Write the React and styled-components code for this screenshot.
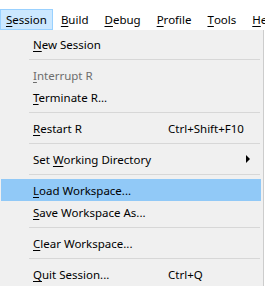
import React from 'react'
import styled, { createGlobalStyle } from 'styled-components'

const Global = createGlobalStyle`
    html, body {
        margin: 0;
        padding: 0;
        background: #ffffff;
    }
    body {
        font-family: "Noto Sans", "Open Sans", sans-serif;
        font-size: 11.5px;
        color: #000;
    }
`

const Window = styled.div`
    width: 265px;
    height: 286px;
    overflow: hidden;
    background: #ffffff;
`

const MenuBar = styled.div`
    display: flex;
    padding-top: 9px;
    height: 21px;
    white-space: nowrap;
    overflow: hidden;
`

const BarItem = styled.div`
    display: flex;
    align-items: center;
    flex-shrink: 0;
    height: 19px;
    padding: 0 ${p => p.$pad || 7}px;
    border: 1px solid ${p => (p.$open ? '#99d1ff' : 'transparent')};
    background: ${p => (p.$open ? '#cce8ff' : 'transparent')};
`

const Key = styled.span`
    text-decoration: underline;
    text-underline-offset: 2px;
    text-decoration-thickness: 1px;
`

const Menu = styled.div`
    width: 264px;
    height: 256px;
    box-sizing: border-box;
    background: #f0f0f0;
    border-right: 1px solid #cccccc;
    padding: 3px 2px 0 1px;
`

const Row = styled.div`
    display: grid;
    grid-template-columns: 135px 1fr 15px;
    align-items: center;
    height: 22px;
    padding-left: 32px;
    background: ${p => (p.$hover ? '#91c9f7' : 'transparent')};
    color: ${p => (p.$disabled ? '#6d6d6d' : '#000')};
    white-space: nowrap;
`

const Shortcut = styled.span`
    color: #000;
`

const Arrow = styled.span`
    justify-self: start;
    width: 0;
    height: 0;
    border-top: 4px solid transparent;
    border-bottom: 4px solid transparent;
    border-left: 4px solid #000;
`

const Separator = styled.div`
    height: 9px;
    display: flex;
    align-items: center;
    padding: 0 1px 0 28px;
    &::after {
        content: '';
        flex: 1;
        height: 1px;
        background: #d7d7d7;
    }
`

const bar = [
    { k: 'S', rest: 'ession', open: true, pad: 5 },
    { k: 'B', rest: 'uild' },
    { k: 'D', rest: 'ebug' },
    { k: 'P', rest: 'rofile' },
    { k: 'T', rest: 'ools' },
    { k: 'H', rest: 'elp' },
]

const items = [
    { pre: '', k: 'N', rest: 'ew Session' },
    'sep',
    { pre: '', k: 'I', rest: 'nterrupt R', disabled: true },
    { pre: '', k: 'T', rest: 'erminate R...' },
    'sep',
    { pre: '', k: 'R', rest: 'estart R', shortcut: 'Ctrl+Shift+F10' },
    'sep',
    { pre: 'Set ', k: 'W', rest: 'orking Directory', submenu: true },
    'sep',
    { pre: '', k: 'L', rest: 'oad Workspace...', hover: true },
    { pre: '', k: 'S', rest: 'ave Workspace As...' },
    'sep',
    { pre: '', k: 'C', rest: 'lear Workspace...' },
    'sep',
    { pre: '', k: 'Q', rest: 'uit Session...', shortcut: 'Ctrl+Q' },
]

function App() {
    return (
        <Window>
            <Global />
            <MenuBar>
                {bar.map(b => (
                    <BarItem key={b.k} $open={b.open} $pad={b.pad}>
                        <Key>{b.k}</Key>{b.rest}
                    </BarItem>
                ))}
            </MenuBar>
            <Menu>
                {items.map((item, i) =>
                    item === 'sep' ? (
                        <Separator key={i} />
                    ) : (
                        <Row key={i} $hover={item.hover} $disabled={item.disabled}>
                            <span>
                                {item.pre}<Key>{item.k}</Key>{item.rest}
                            </span>
                            <Shortcut>{item.shortcut || ''}</Shortcut>
                            {item.submenu ? <Arrow /> : <span />}
                        </Row>
                    )
                )}
            </Menu>
        </Window>
    )
}

export default App
